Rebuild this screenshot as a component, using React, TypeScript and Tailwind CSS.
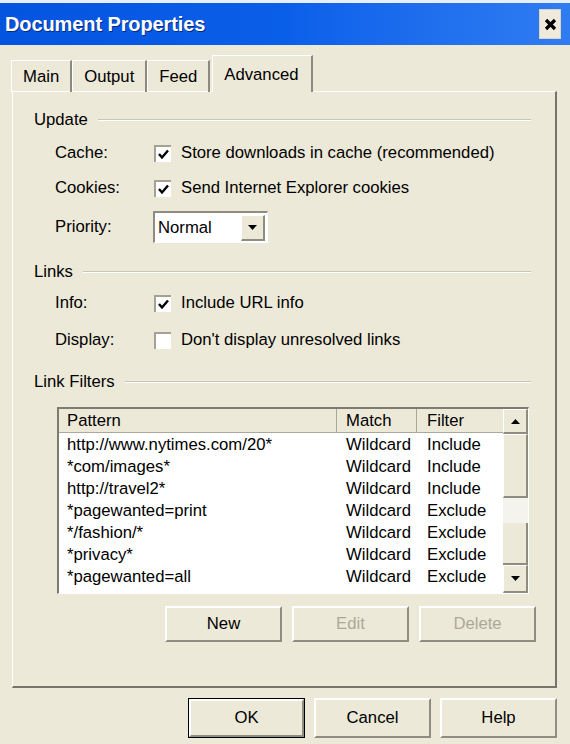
import React from "react";

const filters = [
  ["http://www.nytimes.com/20*", "Wildcard", "Include"],
  ["*com/images*", "Wildcard", "Include"],
  ["http://travel2*", "Wildcard", "Include"],
  ["*pagewanted=print", "Wildcard", "Exclude"],
  ["*/fashion/*", "Wildcard", "Exclude"],
  ["*privacy*", "Wildcard", "Exclude"],
  ["*pagewanted=all", "Wildcard", "Exclude"],
];

function Check({ checked }: { checked: boolean }) {
  return (
    <div className="w-[17px] h-[17px] bg-white border-l-2 border-t-2 border-[#a5a294] flex items-center justify-center">
      {checked && (
        <svg width="11" height="11" viewBox="0 0 11 11">
          <path d="M1 5 L4 8.5 L10 1.5" fill="none" stroke="#000" strokeWidth="2.4" />
        </svg>
      )}
    </div>
  );
}

function Heading({ title }: { title: string }) {
  return (
    <div className="flex items-center h-[22px] pr-[24px]">
      <span>{title}</span>
      <div className="flex-1 ml-[10px] border-t border-[#c9c6b8] border-b border-b-white" />
    </div>
  );
}

function Row({ label, children }: { label: string; children: React.ReactNode }) {
  return (
    <div className="flex items-center h-[22px] pl-[21px]">
      <span className="w-[99px]">{label}</span>
      {children}
    </div>
  );
}

function Arrow({ up }: { up?: boolean }) {
  return (
    <svg width="9" height="5" viewBox="0 0 9 5">
      <path d={up ? "M0 5 L4.5 0 L9 5 Z" : "M0 0 L9 0 L4.5 5 Z"} fill="#000" />
    </svg>
  );
}

function Btn({ label, disabled, main }: { label: string; disabled?: boolean; main?: boolean }) {
  return (
    <div
      className={`flex items-center justify-center w-[117px] ${main ? "border border-black" : ""}`}
    >
      <div
        className={`w-full h-full flex items-center justify-center border-l-2 border-t-2 border-white border-r-2 border-b-2 border-r-[#8f8d80] border-b-[#8f8d80] ${
          disabled ? "text-[#aca899]" : "text-black"
        }`}
      >
        {label}
      </div>
    </div>
  );
}

export default function App() {
  return (
    <div className="w-[570px] h-[744px] bg-[#ece9d8] font-['Liberation_Sans',Arial,sans-serif] text-[16.7px] text-black overflow-hidden">
      <div className="h-[3px] bg-[#e8eefa]" />
      <div className="h-[42px] flex items-center justify-between pl-[5px] pr-[9px] bg-gradient-to-r from-[#0454e0] via-[#0a5fe9] to-[#2f7cf2]">
        <span className="text-white font-bold text-[20px] tracking-[-0.1px] [text-shadow:1px_1px_0_#0a2a80]">
          Document Properties
        </span>
        <div className="w-[22px] h-[30px] bg-[#efeadb] border border-[#d8d4c4] flex items-center justify-center">
          <svg width="13" height="13" viewBox="0 0 13 13">
            <path d="M2 2 L11 11 M11 2 L2 11" stroke="#000" strokeWidth="3.2" />
          </svg>
        </div>
      </div>

      <div className="flex items-end h-[46px] pl-[11px]">
        {["Main", "Output", "Feed"].map((t) => (
          <div
            key={t}
            className="h-[32px] flex items-center px-[11px] border-l border-t border-white border-r-2 border-r-[#8c8a7e] mb-[-1px]"
          >
            {t}
          </div>
        ))}
        <div className="h-[37px] flex items-start pt-[6px] px-[11px] ml-[2px] border-l border-t border-white border-r-2 border-r-[#8c8a7e] bg-[#ece9d8] relative z-10 mb-[-1px]">
          <span className="w-[76px]">Advanced</span>
        </div>
      </div>

      <div className="mx-[12px] w-[545px] h-[597px] border-l border-t border-white border-r-2 border-b-2 border-r-[#77756a] border-b-[#77756a] pt-[17px] pl-[21px]">
        <Heading title="Update" />
        <div className="mt-[11px]">
          <Row label="Cache:">
            <Check checked />
            <span className="ml-[10px]">Store downloads in cache (recommended)</span>
          </Row>
        </div>
        <div className="mt-[13px]">
          <Row label="Cookies:">
            <Check checked />
            <span className="ml-[10px]">Send Internet Explorer cookies</span>
          </Row>
        </div>
        <div className="mt-[12px] flex items-center h-[32px] pl-[21px]">
          <span className="w-[98px]">Priority:</span>
          <div className="w-[115px] h-[32px] bg-white border-l-2 border-t-2 border-[#8f8d80] border-r border-b border-r-white border-b-white flex items-center">
            <span className="flex-1 pl-[3px]">Normal</span>
            <div className="w-[24px] h-[26px] mr-[2px] bg-[#ece9d8] border-l border-t border-white border-r-2 border-b-2 border-r-[#8f8d80] border-b-[#8f8d80] flex items-center justify-center">
              <Arrow />
            </div>
          </div>
        </div>
        <div className="mt-[18px]">
          <Heading title="Links" />
        </div>
        <div className="mt-[9px]">
          <Row label="Info:">
            <Check checked />
            <span className="ml-[10px]">Include URL info</span>
          </Row>
        </div>
        <div className="mt-[15px]">
          <Row label="Display:">
            <Check checked={false} />
            <span className="ml-[10px]">Don't display unresolved links</span>
          </Row>
        </div>
        <div className="mt-[20px]">
          <Heading title="Link Filters" />
        </div>

        <div className="mt-[14px] ml-[23px] w-[472px] h-[187px] bg-white border-l-2 border-t-2 border-[#7e7c70] border-r border-b border-r-white border-b-white flex">
          <div className="flex-1 flex flex-col">
            <div className="h-[24px] flex bg-[#ece9d8] border-b border-[#aca899]">
              <div className="w-[278px] pl-[8px] flex items-center border-r border-[#aca899]">Pattern</div>
              <div className="w-[80px] pl-[9px] flex items-center border-r border-[#aca899]">Match</div>
              <div className="flex-1 pl-[10px] flex items-center">Filter</div>
            </div>
            <div className="flex flex-col pt-[1px]">
              {filters.map(([p, m, f]) => (
                <div key={p} className="h-[22px] flex items-center">
                  <div className="w-[278px] pl-[8px]">{p}</div>
                  <div className="w-[80px] pl-[9px]">{m}</div>
                  <div className="flex-1 pl-[10px]">{f}</div>
                </div>
              ))}
            </div>
          </div>
          <div className="w-[25px] flex flex-col bg-[#f4f3ee]">
            <div className="h-[25px] bg-[#ece9d8] border-l border-t border-white border-r-2 border-b-2 border-r-[#8f8d80] border-b-[#8f8d80] flex items-center justify-center">
              <Arrow up />
            </div>
            <div className="h-[64px] bg-[#ece9d8] border-l border-t border-white border-r-2 border-b-2 border-r-[#8f8d80] border-b-[#8f8d80]" />
            <div className="h-[25px]" />
            <div className="flex-1 bg-[#ece9d8] border-r-2 border-b-2 border-r-[#8f8d80] border-b-[#8f8d80]" />
            <div className="h-[28px] bg-[#ece9d8] border-l border-t border-white border-r-2 border-b-2 border-r-[#8f8d80] border-b-[#8f8d80] flex items-center justify-center">
              <Arrow />
            </div>
          </div>
        </div>

        <div className="mt-[12px] ml-[131px] h-[36px] flex gap-[10px]">
          <Btn label="New" />
          <Btn label="Edit" disabled />
          <Btn label="Delete" disabled />
        </div>
      </div>

      <div className="mt-[10px] h-[40px] flex justify-end gap-[9px] pr-[13px]">
        <Btn label="OK" main />
        <Btn label="Cancel" />
        <Btn label="Help" />
      </div>
    </div>
  );
}
